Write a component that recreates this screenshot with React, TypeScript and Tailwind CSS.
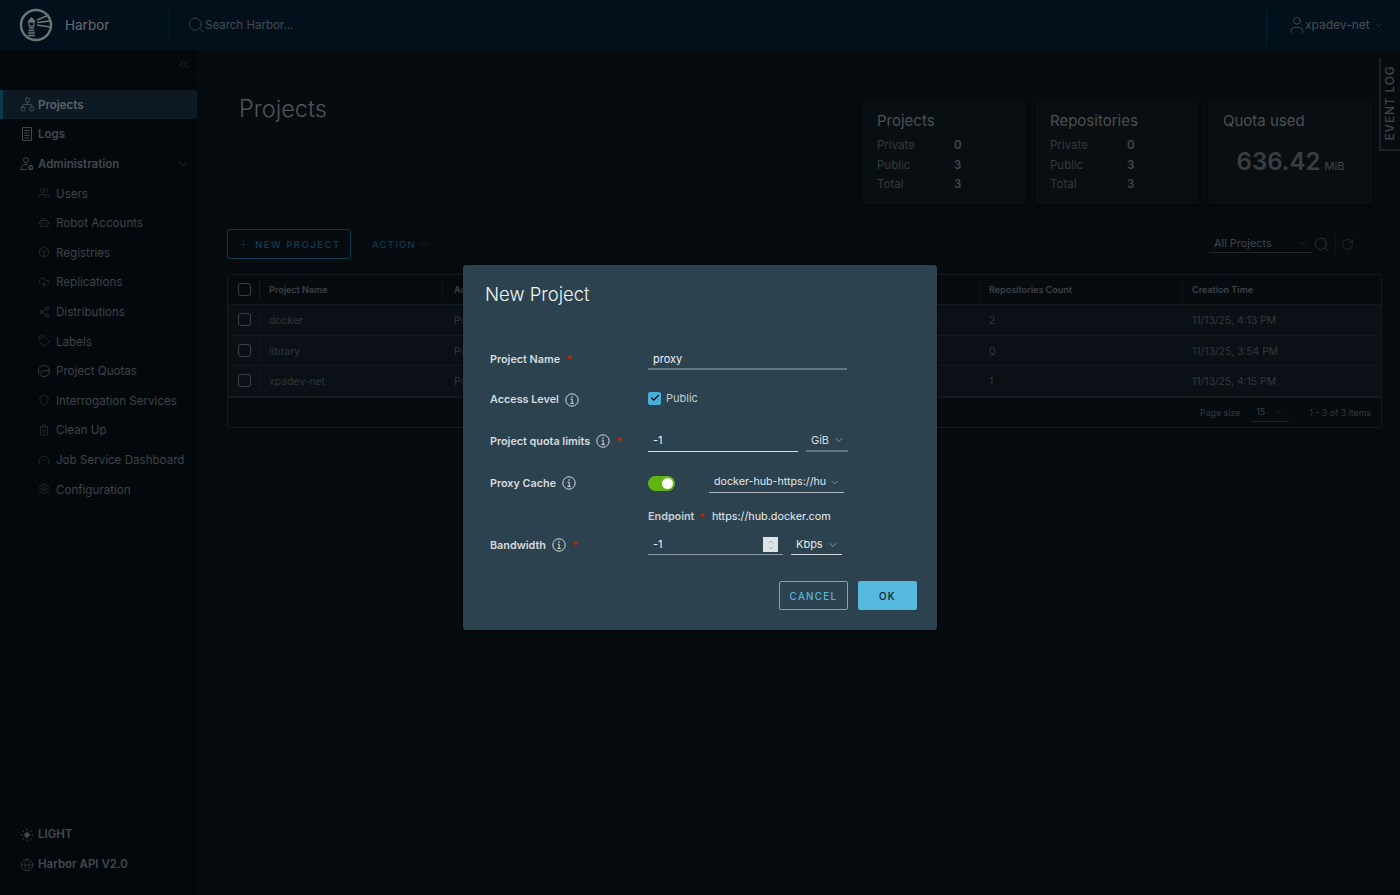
import React from "react";
import {
  Search, User, ChevronDown, ChevronsLeft, RotateCw, Network, Users, Bot, Box,
  CloudUpload, Share2, Tag, Shield, Trash2, Gauge, Settings, Sun, Globe, Plus, Check, ChevronUp,
} from "lucide-react";

function Logo() {
  return (
    <svg width="34" height="34" viewBox="0 0 34 34" fill="none" stroke="#6f7477" className="shrink-0">
      <circle cx="17" cy="17" r="15" strokeWidth="2.4" />
      <path d="M9 13.5 L12.5 9.5 L16 13.5 Z" fill="#6f7477" strokeWidth="1" />
      <rect x="10" y="14" width="5" height="4" strokeWidth="1.2" />
      <path d="M10 20h5M9.6 22.5h5.8M9.2 25h6.6M9 27.5h7" strokeWidth="1.4" />
      <path d="M18 12 L30 7 M18 14.5 L31 13 M18 17 L31 19" strokeWidth="1.6" />
    </svg>
  );
}

function InfoIcon() {
  return (
    <svg width="14" height="14" viewBox="0 0 14 14" fill="none" stroke="#d5dadd" className="shrink-0">
      <circle cx="7" cy="7" r="6.2" strokeWidth="1" />
      <path d="M5.6 6.2H7.2V10.4M5.4 10.4H8.8" strokeWidth="1" />
      <circle cx="7" cy="4" r=".8" fill="#d5dadd" stroke="none" />
    </svg>
  );
}

function QuotaIcon() {
  return (
    <svg width="14" height="14" viewBox="0 0 14 14" fill="none" stroke="#36393d" strokeWidth="1" className="shrink-0">
      <circle cx="7" cy="7" r="5.6" />
      <path d="M2.6 9.8 L6.2 6.6 H12.5" />
    </svg>
  );
}

function DocIcon() {
  return (
    <svg width="14" height="16" viewBox="0 0 14 16" fill="none" stroke="currentColor" strokeWidth="1" className="shrink-0">
      <rect x="2.5" y="1.5" width="9" height="13" rx=".5" />
      <path d="M4.5 4.5h5M4.5 7h5M4.5 9.5h5M4.5 12h5" />
    </svg>
  );
}

function AdminIcon() {
  return (
    <svg width="14" height="16" viewBox="0 0 14 16" fill="none" stroke="currentColor" strokeWidth="1" className="shrink-0">
      <circle cx="6" cy="4.2" r="2.4" />
      <path d="M1 13.5v-1.6C1 9.6 3.4 8.6 6 8.6c.8 0 1.5.1 2.1.3M1 13.5h6" />
      <circle cx="10.8" cy="11.6" r="1.8" strokeWidth="1.5" />
    </svg>
  );
}

function Star() {
  return <span className="text-[11px] leading-none text-[#c92100]">*</span>;
}

const subItems: [React.ReactNode, string][] = [
  [<Users size={14} strokeWidth={1} />, "Users"],
  [<Bot size={15} strokeWidth={1} />, "Robot Accounts"],
  [<Box size={14} strokeWidth={1} />, "Registries"],
  [<CloudUpload size={15} strokeWidth={1} />, "Replications"],
  [<Share2 size={14} strokeWidth={1} />, "Distributions"],
  [<Tag size={14} strokeWidth={1} />, "Labels"],
  [<QuotaIcon />, "Project Quotas"],
  [<Shield size={14} strokeWidth={1} />, "Interrogation Services"],
  [<Trash2 size={14} strokeWidth={1} />, "Clean Up"],
  [<Gauge size={14} strokeWidth={1} />, "Job Service Dashboard"],
  [<Settings size={14} strokeWidth={1} />, "Configuration"],
];

function Header() {
  return (
    <header className="flex h-[50px] shrink-0 items-center bg-[#01101a]">
      <div className="flex h-[40px] w-[169px] items-center gap-[12px] border-r border-[#04161f] pl-[19px]">
        <Logo />
        <span className="text-[13.5px] leading-[16px] text-[#686d70]">Harbor</span>
      </div>
      <div className="flex flex-1 items-center pl-[18px] text-[#474c50]">
        <Search size={18} strokeWidth={1} />
        <span className="pt-[2px] text-[11.5px]">Search Harbor...</span>
      </div>
      <div className="flex h-[40px] w-[134px] items-center border-l border-[#04202b] pl-[20px] text-[#4a4f53]">
        <User size={20} strokeWidth={1} className="mr-[-2px]" />
        <span className="text-[12px]">xpadev-net</span>
        <ChevronDown size={11} strokeWidth={1} className="ml-[3px]" />
      </div>
    </header>
  );
}

function Sidebar() {
  return (
    <aside className="flex w-[197px] shrink-0 flex-col bg-[#03080d]">
      <div className="flex h-[30px] items-center justify-end border-b border-[#060c11] pr-[6px] text-[#3e4347]">
        <ChevronsLeft size={15} strokeWidth={1} />
      </div>
      <nav className="mt-[10px] flex flex-col text-[#44494d]">
        <div className="flex h-[29px] items-center gap-[3px] rounded-r-[3px] border-l-[3px] border-[#0b3a4e] bg-[#0e1a23] pl-[17px] text-[11.5px] font-semibold text-[#5d6266]">
          <Network size={15} strokeWidth={1} />
          <span className="pt-[2px]">Projects</span>
        </div>
        <div className="flex h-[30px] items-center gap-[4px] pl-[20px] text-[11.5px] font-semibold">
          <DocIcon />
          <span className="pt-[2px]">Logs</span>
        </div>
        <div className="flex h-[29.5px] items-center gap-[4px] pl-[20px] pr-[7px] text-[11.5px] font-semibold">
          <AdminIcon />
          <span className="flex-1 pt-[1px]">Administration</span>
          <ChevronDown size={14} strokeWidth={1} />
        </div>
        {subItems.map(([icon, label]) => (
          <div key={label} className="flex h-[29.6px] items-center gap-[6px] pl-[38px] text-[11.6px] text-[#3f4448]">
            <span className="flex w-[12px] items-center justify-center">{icon}</span>
            <span className="pt-[2px]">{label}</span>
          </div>
        ))}
      </nav>
      <div className="mt-auto flex flex-col pb-[15px] text-[11.5px] font-semibold text-[#44494d]">
        <div className="flex h-[30px] items-center gap-[4px] pl-[20px]">
          <Sun size={14} strokeWidth={1.5} fill="#44494d" />
          LIGHT
        </div>
        <div className="flex h-[30px] items-center gap-[4px] pl-[20px]">
          <Globe size={14} strokeWidth={1} />
          Harbor API V2.0
        </div>
      </div>
    </aside>
  );
}

function StatCard({ title }: { title: string }) {
  const rows = [["Private", "0"], ["Public", "3"], ["Total", "3"]];
  return (
    <div className="h-[104px] w-[164px] rounded-[3px] bg-[#090e12] pl-[15px] pt-[10px] shadow-[0_1px_2px_#000]">
      <div className="mb-[5px] text-[15px] leading-[20px] text-[#4b5054]">{title}</div>
      {rows.map(([k, v]) => (
        <div key={k} className="flex h-[19.6px] items-center text-[11.5px] text-[#36393d]">
          <span className="w-[77px]">{k}</span>
          <span className="font-semibold text-[#43474a]">{v}</span>
        </div>
      ))}
    </div>
  );
}

function Box13() {
  return <span className="block h-[13px] w-[13px] rounded-[3px] border border-[#3c4145]" />;
}

const colsClass = "grid grid-cols-[32px_183px_537px_203px_1fr]";

function TableRow({ name, count, time }: { name: string; count: string; time: string }) {
  return (
    <div className={`${colsClass} h-[30.6px] items-center border-b border-[#11181e] bg-[#0a1015] text-[10.4px] text-[#33383c]`}>
      <div className="flex h-[21px] items-center border-r border-[#11181e] pl-[10px]">
        <Box13 />
      </div>
      <div className="pl-[9px] pt-[2px] text-[#2f3640]">{name}</div>
      <div className="pl-[11px] pt-[2px]">Public</div>
      <div className="pl-[9px] pt-[2px]">{count}</div>
      <div className="pl-[9px] pt-[2px]">{time}</div>
    </div>
  );
}

function Main() {
  return (
    <main className="relative flex-1 bg-[#060b10] pl-[30px] pr-[18px]">
      <div className="flex h-[179px] items-start justify-between pr-[9px] pt-[51px]">
        <h1 className="ml-[12px] mt-[-9px] text-[23.5px] font-light leading-[34px] text-[#4f5458]">Projects</h1>
        <div className="flex gap-[9px]">
          <StatCard title="Projects" />
          <StatCard title="Repositories" />
          <div className="h-[104px] w-[165px] rounded-[3px] bg-[#090e12] pl-[15px] pt-[10px] shadow-[0_1px_2px_#000]">
            <div className="text-[15px] leading-[20px] text-[#4b5054]">Quota used</div>
            <div className="mt-[14px] flex items-baseline justify-center gap-[4px] pr-[15px]">
              <span className="text-[24px] font-semibold leading-[34px] text-[#3a3e42]">636.42</span>
              <span className="text-[11px] font-medium text-[#3a3e42]">MiB</span>
            </div>
          </div>
        </div>
      </div>
      <div className="flex h-[45px] items-start justify-between">
        <div className="flex items-center">
          <div className="flex h-[30px] w-[124px] items-center justify-center gap-[5px] rounded-[3px] border border-[#0e3a4d] pt-[1px] text-[9.5px] font-semibold tracking-[1.5px] text-[#0f3a4d]">
            <Plus size={13} strokeWidth={1} />
            <span className="pt-[1px]">NEW PROJECT</span>
          </div>
          <div className="ml-[21px] flex items-center gap-[1px] pt-[1px] text-[9.5px] font-medium tracking-[1.2px] text-[#0f3a4d]">
            <span className="pt-[1px]">ACTION</span>
            <ChevronDown size={14} strokeWidth={1} />
          </div>
        </div>
        <div className="mr-[28px] flex items-center pt-[2px] text-[#3c4145]">
          <div className="flex h-[22px] w-[103px] items-center justify-between border-b border-[#24292d] pl-[5px] pr-[4px] pt-[3px] text-[10.9px] text-[#42474b]">
            All Projects
            <ChevronDown size={10} strokeWidth={1} />
          </div>
          <Search size={17} strokeWidth={1} className="ml-[1px] mt-[5px]" />
          <span className="ml-[5px] mr-[1px] mt-[3px] h-[19px] w-px bg-[#10161b]" />
          <RotateCw size={13} strokeWidth={1} className="ml-[4px] mt-[4px]" />
        </div>
      </div>
      <div className="rounded-[3px] border border-[#12191f]">
        <div className={`${colsClass} h-[30px] items-center border-b border-[#12191f] text-[9px] font-semibold text-[#3d4246]`}>
          <div className="flex h-[20px] items-center border-r border-[#12191f] pl-[10px]">
            <Box13 />
          </div>
          <div className="flex h-[20px] items-center border-r border-[#10161b] pl-[9px]">Project Name</div>
          <div className="flex h-[20px] items-center border-r border-[#10161b] pl-[11px]">Access Level</div>
          <div className="flex h-[20px] items-center border-r border-[#10161b] pl-[9px]">Repositories Count</div>
          <div className="pl-[9px]">Creation Time</div>
        </div>
        <TableRow name="docker" count="2" time="11/13/25, 4:13 PM" />
        <TableRow name="library" count="0" time="11/13/25, 3:54 PM" />
        <TableRow name="xpadev-net" count="1" time="11/13/25, 4:15 PM" />
        <div className="flex h-[30px] items-center justify-end border-t border-[#12191f] pr-[10px] text-[8.8px] text-[#33383c]">
          Page size
          <span className="ml-[11px] flex w-[38px] items-center justify-between border-b border-[#1e2327] px-[5px] py-[3px] text-[#3d4246]">
            15
            <ChevronDown size={9} strokeWidth={1} />
          </span>
          <span className="ml-[20px]">1 - 3 of 3 items</span>
        </div>
      </div>
      <div className="absolute right-0 top-[7px] flex h-[94px] w-[21px] items-center justify-center rounded-tl-[2px] border-b-2 border-l-2 border-[#1d2226] bg-[#060b10]">
        <span className="rotate-[-90deg] whitespace-nowrap text-[12px] font-medium tracking-[0.8px] text-[#43474b]">EVENT LOG</span>
      </div>
    </main>
  );
}

function Label({ text, info, star }: { text: string; info?: boolean; star?: boolean }) {
  return (
    <div className="flex w-[158px] shrink-0 items-center gap-[6px] text-[10.8px] font-semibold text-[#d7dbde]">
      <span className="pt-[2px]">{text}</span>
      {info && <InfoIcon />}
      {star && <Star />}
    </div>
  );
}

function Modal() {
  return (
    <div className="absolute inset-0 flex items-center justify-center">
      <div className="h-[365px] w-[474px] rounded-[3px] bg-[#2c424e] pl-[22px] pr-[20px] shadow-[0_1px_3px_#000]">
        <h2 className="flex h-[58px] items-center pt-[2px] text-[18.5px] font-light text-[#f3f5f6]">New Project</h2>
        <div className="ml-[5px] mt-[14px] flex h-[44px] items-center text-[11px]">
          <Label text="Project Name" star />
          <div className="flex h-[22px] w-[199px] items-center border-b-2 border-[#647783] pl-[5px] pt-[2px] text-[#eef1f2]">proxy</div>
        </div>
        <div className="ml-[5px] flex h-[37px] items-center">
          <Label text="Access Level" info />
          <div className="mb-[3px] flex items-center gap-[5px] text-[11px] text-[#c6cdd1]">
            <span className="flex h-[13px] w-[13px] items-center justify-center rounded-[2px] bg-[#49afd9] text-black">
              <Check size={10} strokeWidth={3} />
            </span>
            Public
          </div>
        </div>
        <div className="ml-[5px] flex h-[46px] items-center">
          <Label text="Project quota limits" info star />
          <div className="flex h-[22px] w-[150px] items-center border-b border-[#d5dadd] pl-[5px] text-[11px] text-[#eef1f2]">-1</div>
          <div className="ml-[8px] flex h-[22px] w-[42px] items-center justify-between border-b-2 border-[#647783] pl-[5px] pr-[3px] text-[11px] text-[#d5dadd]">
            GiB
            <ChevronDown size={12} strokeWidth={1} />
          </div>
        </div>
        <div className="ml-[5px] flex h-[38px] items-center">
          <Label text="Proxy Cache" info />
          <span className="flex h-[15px] w-[27px] items-center justify-end rounded-full bg-[#60b515] pr-[2px]">
            <span className="h-[11px] w-[11px] rounded-full bg-white" />
          </span>
          <div className="ml-[34px] flex h-[20px] w-[135px] items-center gap-[3px] border-b border-[#aab4ba] pl-[5px] text-[10.7px] text-[#e3e7e9]">
            <span className="overflow-hidden whitespace-nowrap">docker-hub-https://hu</span>
            <ChevronDown size={11} strokeWidth={1} className="shrink-0" />
          </div>
        </div>
        <div className="ml-[163px] flex h-[28px] items-center gap-[5px] pt-[2px] text-[10.8px] text-[#e8ecee]">
          <span className="font-semibold text-[#c6cdd1]">Endpoint</span>
          <Star />
          <span className="ml-[2px]">https://hub.docker.com</span>
        </div>
        <div className="ml-[5px] flex h-[30px] items-center">
          <Label text="Bandwidth" info star />
          <div className="flex h-[20px] w-[135px] items-center justify-between border-b border-[#8a99a2] pl-[5px] pr-[5px] text-[11px] text-[#eef1f2]">
            -1
            <span className="flex h-[15px] w-[15px] flex-col items-center justify-center bg-[#dfe3e6] text-[#6c7276]">
              <ChevronUp size={8} strokeWidth={1.5} className="mb-[-1px]" />
              <ChevronDown size={8} strokeWidth={1.5} className="mt-[-1px]" />
            </span>
          </div>
          <div className="ml-[8px] flex h-[20px] w-[51px] items-center justify-between border-b border-[#d5dadd] pl-[5px] pr-[3px] text-[11px] text-[#e3e7e9]">
            Kbps
            <ChevronDown size={12} strokeWidth={1} />
          </div>
        </div>
        <div className="mt-[21px] flex justify-end gap-[10px]">
          <div className="flex h-[29px] w-[69px] items-center justify-center rounded-[2px] border border-[#57b5db] pt-[3px] text-[9.8px] font-medium tracking-[1.3px] text-[#57b5db]">CANCEL</div>
          <div className="flex h-[29px] w-[59px] items-center justify-center rounded-[2px] bg-[#57b8e0] pt-[3px] text-[9.8px] font-medium tracking-[1.3px] text-[#06202c]">OK</div>
        </div>
      </div>
    </div>
  );
}

export default function App() {
  return (
    <div className="relative flex h-[895px] w-[1400px] flex-col overflow-hidden bg-[#060b10] font-[Inter,sans-serif]">
      <Header />
      <div className="flex min-h-0 flex-1">
        <Sidebar />
        <Main />
      </div>
      <Modal />
    </div>
  );
}
